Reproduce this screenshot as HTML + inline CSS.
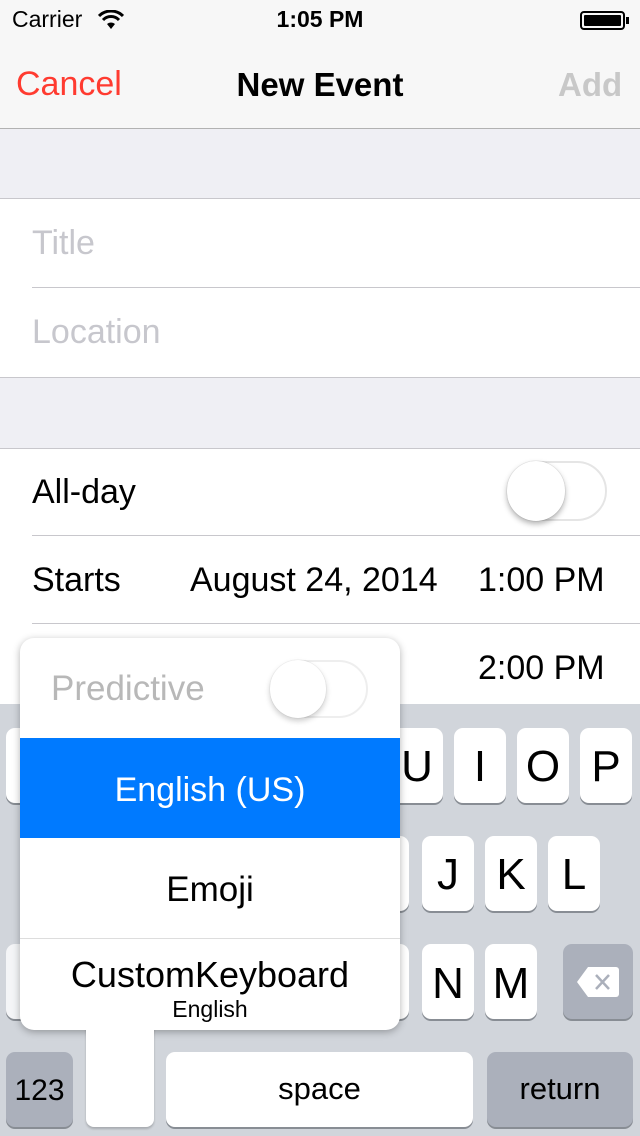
<!DOCTYPE html>
<html><head><meta charset="utf-8"><style>
*{margin:0;padding:0;box-sizing:border-box}
body{width:640px;height:1136px;position:relative;overflow:hidden;background:#efeff4;font-family:"Liberation Sans",Helvetica,Arial,sans-serif}
.abs{position:absolute}
.key{position:absolute;background:#fff;border-radius:9px;box-shadow:0 2px 0 #888d94;font-size:44px;text-align:center;color:#000}
.dk{background:#abb0bb}
.line{position:absolute;height:1px;background:#c8c7cc}
</style></head><body>
<div class="abs" style="left:0;top:0;width:640px;height:128px;background:#f7f7f7"></div>
<div class="abs" style="left:12px;top:6px;font-size:23px">Carrier</div>
<svg class="abs" style="left:98px;top:10px" width="26" height="20" viewBox="0 0 26 20"><path d="M13 19 L9 14 A6 6 0 0 1 17 14 Z" fill="#000"/><path d="M5 10 A11 11 0 0 1 21 10" stroke="#000" stroke-width="3" fill="none"/><path d="M1 6 A17 17 0 0 1 25 6" stroke="#000" stroke-width="3" fill="none"/></svg>
<div class="abs" style="left:0;width:640px;top:6px;text-align:center;font-size:23px;font-weight:bold">1:05 PM</div>
<div class="abs" style="left:580px;top:11px;width:45px;height:19px;border:2px solid #000;border-radius:4px;padding:2px"><div style="background:#000;width:100%;height:100%;border-radius:1px"></div></div>
<div class="abs" style="left:626px;top:17px;width:3px;height:7px;background:#000"></div>
<div class="abs" style="left:16px;top:65px;font-size:34px;color:#ff3b30">Cancel</div>
<div class="abs" style="left:0;width:640px;top:66px;text-align:center;font-size:33px;font-weight:bold">New Event</div>
<div class="abs" style="left:558px;top:66px;font-size:33px;font-weight:bold;color:#c8c8c8">Add</div>
<div class="line" style="left:0;top:128px;width:640px;background:#b2b2b2"></div>

<div class="line" style="left:0;top:198px;width:640px"></div>
<div class="abs" style="left:0;top:199px;width:640px;height:178px;background:#fff"></div>
<div class="abs" style="left:32px;top:224px;font-size:34px;color:#c7c7cd">Title</div>
<div class="line" style="left:32px;top:287px;width:608px"></div>
<div class="abs" style="left:32px;top:313px;font-size:34px;color:#c7c7cd">Location</div>
<div class="line" style="left:0;top:377px;width:640px"></div>

<div class="line" style="left:0;top:448px;width:640px"></div>
<div class="abs" style="left:0;top:449px;width:640px;height:260px;background:#fff"></div>
<div class="abs" style="left:32px;top:473px;font-size:34px">All-day</div>
<div class="abs" style="left:507px;top:461px;width:100px;height:60px;border-radius:30px;border:2px solid #e5e5e5;background:#fff"></div>
<div class="abs" style="left:507px;top:461px;width:58px;height:60px;border-radius:30px;background:#fff;box-shadow:0 3px 6px rgba(0,0,0,.3),0 0 1px rgba(0,0,0,.3)"></div>
<div class="line" style="left:32px;top:535px;width:608px"></div>
<div class="abs" style="left:32px;top:561px;font-size:34px">Starts</div>
<div class="abs" style="left:190px;top:561px;font-size:34px">August 24, 2014</div>
<div class="abs" style="left:478px;top:561px;font-size:34px">1:00 PM</div>
<div class="line" style="left:32px;top:623px;width:608px"></div>
<div class="abs" style="left:478px;top:649px;font-size:34px">2:00 PM</div>

<div class="abs" style="left:0;top:704px;width:640px;height:432px;background:#d1d5db"></div>
<div class="key" style="left:6px;top:728px;width:52px;height:75px"></div>
<div class="key" style="left:391px;top:728px;width:52px;height:75px;line-height:78px">U</div>
<div class="key" style="left:454px;top:728px;width:52px;height:75px;line-height:78px">I</div>
<div class="key" style="left:517px;top:728px;width:52px;height:75px;line-height:78px">O</div>
<div class="key" style="left:580px;top:728px;width:52px;height:75px;line-height:78px">P</div>
<div class="key" style="left:357px;top:836px;width:52px;height:75px"></div>
<div class="key" style="left:422px;top:836px;width:52px;height:75px;line-height:78px">J</div>
<div class="key" style="left:485px;top:836px;width:52px;height:75px;line-height:78px">K</div>
<div class="key" style="left:548px;top:836px;width:52px;height:75px;line-height:78px">L</div>
<div class="key" style="left:6px;top:944px;width:70px;height:75px;background:#f4f5f7"></div>
<div class="key" style="left:357px;top:944px;width:52px;height:75px"></div>
<div class="key" style="left:422px;top:944px;width:52px;height:75px;line-height:80px">N</div>
<div class="key" style="left:485px;top:944px;width:52px;height:75px;line-height:80px">M</div>
<div class="key dk" style="left:563px;top:944px;width:70px;height:75px"></div>
<svg class="abs" style="left:576px;top:966px" width="44" height="32" viewBox="0 0 44 32"><path d="M12 1 H40 A3 3 0 0 1 43 4 V28 A3 3 0 0 1 40 31 H12 L1 16 Z" fill="#fff"/><path d="M20 9 L33 23 M33 9 L20 23" stroke="#abb0bb" stroke-width="2.5"/></svg>
<div class="key dk" style="left:6px;top:1052px;width:67px;height:75px;line-height:78px;font-size:30px">123</div>
<div class="key" style="left:166px;top:1052px;width:307px;height:75px;line-height:74px;font-size:31px">space</div>
<div class="key dk" style="left:487px;top:1052px;width:146px;height:75px;line-height:74px;font-size:31px">return</div>

<div class="abs" style="left:86px;top:1010px;width:68px;height:117px;background:#fff;border-radius:0 0 8px 8px;box-shadow:0 2px 2px rgba(0,0,0,.2)"></div>
<div class="abs" style="left:20px;top:638px;width:380px;height:392px;border-radius:14px;background:#fff;box-shadow:0 2px 8px rgba(0,0,0,.3);overflow:hidden">
<div class="abs" style="left:31px;top:31px;font-size:35px;color:#b8b8b8">Predictive</div>
<div class="abs" style="left:250px;top:22px;width:98px;height:58px;border-radius:29px;border:2px solid #eee"></div>
<div class="abs" style="left:250px;top:22px;width:56px;height:58px;border-radius:29px;background:#fff;box-shadow:0 3px 6px rgba(0,0,0,.2),0 0 1px rgba(0,0,0,.2)"></div>
<div class="abs" style="left:0;top:100px;width:380px;height:100px;background:#007aff;color:#fff;font-size:34px;text-align:center;line-height:104px">English (US)</div>
<div class="abs" style="left:0;top:200px;width:380px;height:100px;font-size:35px;text-align:center;line-height:104px">Emoji</div>
<div class="abs" style="left:0;top:300px;width:380px;height:1px;background:#ddd"></div>
<div class="abs" style="left:0;top:316px;width:380px;font-size:36px;text-align:center">CustomKeyboard</div>
<div class="abs" style="left:0;top:358px;width:380px;font-size:23px;text-align:center">English</div>
</div>
<div class="abs" style="left:86px;top:1026px;width:68px;height:20px;background:#fff"></div>
</body></html>
